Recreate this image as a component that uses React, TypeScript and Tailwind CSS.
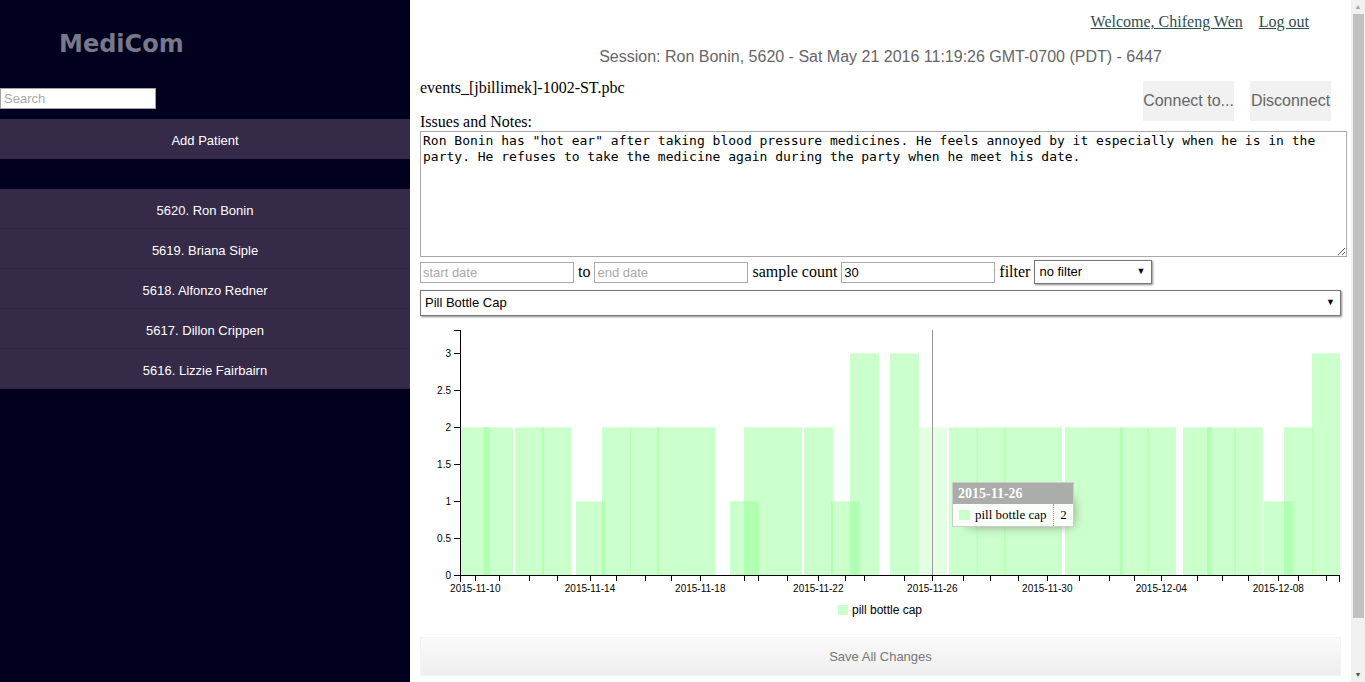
import React from "react";

const bars: [number, number, number, boolean?][] = [
  [460.3, 490, 2], [483.7, 513, 2],
  [515, 544, 2], [542, 571, 2],
  [576, 605, 1],
  [602, 630.7, 2], [630, 659.3, 2], [657.3, 686.7, 2], [686.7, 715, 2],
  [730, 759, 1], [744, 773.3, 2], [773.3, 802, 2],
  [804, 833, 2], [831, 860, 1], [850, 879, 3],
  [890, 919, 3],
  [919, 947, 2, true],
  [949, 977.7, 2], [976.7, 1005.3, 2], [1004.3, 1033.3, 2], [1033.3, 1062, 2],
  [1065, 1093.7, 2], [1093.7, 1122.7, 2], [1120, 1148.7, 2], [1147.7, 1176, 2],
  [1183, 1211.7, 2], [1207, 1235.7, 2], [1234.7, 1262.7, 2],
  [1264, 1293, 1], [1284, 1312.7, 2],
  [1312, 1340, 3],
];

const xTicks = [
  460.3, 475.3, 498.7, 529.3, 556.7, 590, 616.3, 644.7, 671.3, 700.3, 744, 758.3, 787.3, 818.3, 845, 864,
  904.3, 932.3, 963.3, 990.3, 1018.3, 1047.3, 1079.3, 1108.7, 1134.3, 1161.3, 1197.3, 1221.7, 1248.3,
  1278.3, 1298.3, 1326, 1339.3,
];

const xLabels: [number, string][] = [
  [475.3, "2015-11-10"], [590, "2015-11-14"], [700.3, "2015-11-18"], [818.3, "2015-11-22"],
  [932.3, "2015-11-26"], [1047.3, "2015-11-30"], [1161.3, "2015-12-04"], [1278.3, "2015-12-08"],
];

const yVals = [0, 0.5, 1, 1.5, 2, 2.5, 3];
const Y = (v: number) => 575.3 - 74 * v;

const patients = [
  "5620. Ron Bonin",
  "5619. Briana Siple",
  "5618. Alfonzo Redner",
  "5617. Dillon Crippen",
  "5616. Lizzie Fairbairn",
];

function Chart() {
  return (
    <div className="relative mt-[6px] h-[300px] w-[921px]">
      <svg width={921} height={300} viewBox="420 322 921 300" className="block">
        {bars.map(([x1, x2, h, hover], i) => (
          <rect
            key={i}
            x={x1}
            y={Y(h)}
            width={x2 - x1}
            height={Y(0) - Y(h)}
            fill="#98ff98"
            fillOpacity={hover ? 0.25 : 0.5}
          />
        ))}
        <line x1={932.5} y1={330} x2={932.5} y2={575} stroke="#999" strokeWidth={1} shapeRendering="crispEdges" />
        {/* y axis */}
        <path d="M454,330.5H460.5V575.5H454" fill="none" stroke="#000" shapeRendering="crispEdges" />
        {yVals.map((v) => (
          <g key={v}>
            <line x1={454} x2={460} y1={Math.round(Y(v)) + 0.5} y2={Math.round(Y(v)) + 0.5} stroke="#000" shapeRendering="crispEdges" />
            <text x={451} y={Y(v)} dy="0.32em" textAnchor="end" fontSize={10} fontFamily="'Liberation Sans', Arial, sans-serif" fill="#000">
              {v}
            </text>
          </g>
        ))}
        {/* x axis */}
        <path d="M460.5,581.5V575.5H1339.5V581.5" fill="none" stroke="#000" shapeRendering="crispEdges" />
        {xTicks.map((x, i) => (
          <line key={i} x1={Math.round(x) + 0.5} x2={Math.round(x) + 0.5} y1={575} y2={581} stroke="#000" shapeRendering="crispEdges" />
        ))}
        {xLabels.map(([x, t]) => (
          <text key={t} x={x} y={591.6} textAnchor="middle" fontSize={10} fontFamily="'Liberation Sans', Arial, sans-serif" fill="#000">
            {t}
          </text>
        ))}
        {/* legend */}
        <rect x={838} y={605} width={10} height={10} fill="#98ff98" fillOpacity={0.5} />
        <text x={852} y={614.3} fontSize={12} fontFamily="'Liberation Sans', Arial, sans-serif" fill="#000">
          pill bottle cap
        </text>
      </svg>
      <div className="absolute left-[532px] top-[160px] w-[122px] border border-[#ccc] bg-white/90 font-['Liberation_Serif',serif] shadow-[7px_7px_12px_-9px_rgb(119,119,119)]">
        <div className="h-[21px] bg-[#aaadaa] pl-[5px] text-[14px] font-bold leading-[21px] text-white">2015-11-26</div>
        <div className="flex h-[22px] items-center text-[13px] text-black">
          <div className="flex h-full flex-1 items-center pl-[6px]">
            <span className="mr-[5px] inline-block h-[10px] w-[11px] bg-[#cbffcb]" />
            <span>pill bottle cap</span>
          </div>
          <div className="flex h-full w-[20px] items-center justify-center border-l border-dotted border-[#999]">2</div>
        </div>
      </div>
    </div>
  );
}

export default function App() {
  return (
    <div className="flex h-[682px] w-[1365px] overflow-hidden bg-white font-['Liberation_Serif',serif] text-black">
      {/* Sidebar */}
      <aside className="flex h-full w-[410px] shrink-0 flex-col bg-[#01001f]">
        <div className="h-[88px] pl-[59px] pt-[28px] font-['DejaVu_Sans',sans-serif] text-[24px] font-bold leading-[32px] text-[#787889]">
          MediCom
        </div>
        <input
          placeholder="Search"
          className="block h-[21px] w-[156px] border border-[#a3a3a3] bg-white px-[3px] font-['Liberation_Sans',Arial,sans-serif] text-[13px] text-black outline-none placeholder:text-[#a9a9a9]"
        />
        <div className="mt-[10px] flex h-[40px] items-center justify-center bg-[#352a48] pt-[4px] font-['Liberation_Sans',Arial,sans-serif] text-[13px] text-white">
          Add Patient
        </div>
        <div className="mt-[30px] flex flex-col">
          {patients.map((p) => (
            <div
              key={p}
              className="flex h-[40px] items-center justify-center border-b border-[#2d2540] bg-[#352a48] pt-[4px] font-['Liberation_Sans',Arial,sans-serif] text-[13px] text-white"
            >
              {p}
            </div>
          ))}
        </div>
      </aside>

      {/* Main */}
      <main className="flex h-full w-[941px] shrink-0 flex-col pl-[10px]">
        <div className="flex justify-end gap-[16px] pr-[42px] pt-[13px] text-[16px] leading-[18px]">
          <a className="text-[#2f4f4f] underline">Welcome, Chifeng Wen</a>
          <a className="text-[#2f4f4f] underline">Log out</a>
        </div>
        <div className="mt-[17px] pr-[10px] text-center font-['Liberation_Sans',Arial,sans-serif] text-[16px] leading-[18px] text-[#666]">
          Session: Ron Bonin, 5620 - Sat May 21 2016 11:19:26 GMT-0700 (PDT) - 6447
        </div>
        <div className="mt-[13px] flex w-[927px] items-start justify-between">
          <div className="flex flex-col text-[16px] leading-[18px]">
            <div>events_[jbillimek]-1002-ST.pbc</div>
            <div className="mt-[16px]">Issues and Notes:</div>
          </div>
          <div className="mr-[16px] mt-[2px] flex gap-[16px] font-['Liberation_Sans',Arial,sans-serif] text-[16px] text-[#666]">
            <div className="flex h-[40px] w-[91px] items-center justify-center bg-[#f1f1f1]">Connect to...</div>
            <div className="flex h-[40px] w-[81px] items-center justify-center bg-[#f1f1f1]">Disconnect</div>
          </div>
        </div>
        <textarea
          className="block h-[126px] w-[927px] border border-[#a9a9a9] px-[2px] pb-[2px] pt-[1px] font-['DejaVu_Sans_Mono',monospace] text-[13px] leading-[16px] text-black outline-none"
          defaultValue={
            'Ron Bonin has "hot ear" after taking blood pressure medicines. He feels annoyed by it especially when he is in the party. He refuses to take the medicine again during the party when he meet his date.'
          }
        />
        <div className="mt-[3px] flex h-[24px] items-center gap-[4px] text-[16px]">
          <input
            placeholder="start date"
            className="h-[21px] w-[154px] border border-[#a9a9a9] px-[2px] font-['Liberation_Sans',Arial,sans-serif] text-[13px] outline-none placeholder:text-[#a9a9a9]"
          />
          <span>to</span>
          <input
            placeholder="end date"
            className="h-[21px] w-[154px] border border-[#a9a9a9] px-[2px] font-['Liberation_Sans',Arial,sans-serif] text-[13px] outline-none placeholder:text-[#a9a9a9]"
          />
          <span>sample count</span>
          <input
            defaultValue="30"
            className="h-[21px] w-[154px] border border-[#a9a9a9] px-[2px] font-['Liberation_Sans',Arial,sans-serif] text-[13px] text-black outline-none"
          />
          <span>filter</span>
          <div className="flex h-[24px] w-[118px] items-center justify-between border border-[#767676] bg-white pl-[4px] pr-[6px] font-['Liberation_Sans',Arial,sans-serif] text-[13px] text-black shadow-[1px_1px_2px_rgba(0,0,0,0.45)]">
            <span>no filter</span>
            <span className="text-[9px]">▼</span>
          </div>
        </div>
        <div className="mt-[6px] flex h-[26px] w-[921px] items-center justify-between border border-[#767676] bg-white pl-[4px] pr-[5px] font-['Liberation_Sans',Arial,sans-serif] text-[13px] text-black shadow-[1px_1px_2px_rgba(0,0,0,0.45)]">
          <span>Pill Bottle Cap</span>
          <span className="text-[9px]">▼</span>
        </div>
        <Chart />
        <div className="mt-[15px] flex h-[39px] w-[921px] items-center justify-center border border-[#f3f3f3] bg-gradient-to-b from-[#fafafa] to-[#eeeeee] font-['Liberation_Sans',Arial,sans-serif] text-[13px] text-[#777]">
          Save All Changes
        </div>
      </main>

      {/* Scrollbar */}
      <div className="flex h-full w-[14px] shrink-0 flex-col items-center bg-[#f1f1f1]">
        <div className="flex h-[14px] w-full items-center justify-center text-[7px] leading-none text-[#a3a3a3]">▲</div>
        <div className="h-[604px] w-[11px] bg-[#c1c1c1]" />
        <div className="flex-1" />
        <div className="flex h-[14px] w-full items-center justify-center text-[7px] leading-none text-[#505050]">▼</div>
      </div>
    </div>
  );
}
